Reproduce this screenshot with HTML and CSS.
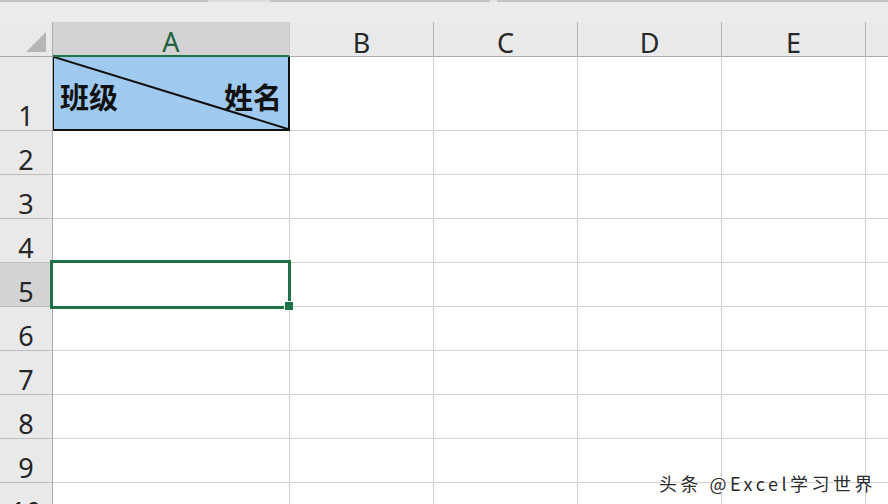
FILE: index.html
```html
<!DOCTYPE html>
<html lang="zh">
<head>
<meta charset="utf-8">
<title>Excel 斜线表头</title>
<link rel="stylesheet" href="styles.css">
</head>
<body>
<div class="sheet">
  <div class="topstrip">
    <span class="seg seg-a"></span>
    <span class="seg seg-gap"></span>
    <span class="seg seg-b"></span>
    <span class="seg seg-gap2"></span>
    <span class="seg seg-c"></span>
  </div>
  <div class="grid">
    <div class="corner">
      <svg class="corner-tri" width="52" height="34" viewBox="0 0 52 34"><polygon points="26,30 46,30 46,10" fill="#b6b6b6"/></svg>
    </div>
    <div class="colhead selected">A</div>
    <div class="colhead">B</div>
    <div class="colhead">C</div>
    <div class="colhead">D</div>
    <div class="colhead">E</div>
    <div class="colhead last"></div>

    <div class="rowhead">1</div>
    <div class="cell a1">
      <svg class="diag" viewBox="0 0 100 100" preserveAspectRatio="none"><line x1="0" y1="0" x2="100" y2="100" stroke="#111" stroke-width="2" vector-effect="non-scaling-stroke"/></svg>
      <span class="a1-text">班级</span>
      <span class="a1-text">姓名</span>
    </div>
    <div class="cell"></div><div class="cell"></div><div class="cell"></div><div class="cell"></div><div class="cell last"></div>

    <div class="rowhead">2</div>
    <div class="cell"></div><div class="cell"></div><div class="cell"></div><div class="cell"></div><div class="cell"></div><div class="cell last"></div>

    <div class="rowhead">3</div>
    <div class="cell"></div><div class="cell"></div><div class="cell"></div><div class="cell"></div><div class="cell"></div><div class="cell last"></div>

    <div class="rowhead">4</div>
    <div class="cell"></div><div class="cell"></div><div class="cell"></div><div class="cell"></div><div class="cell"></div><div class="cell last"></div>

    <div class="rowhead selected">5</div>
    <div class="cell active">
      <div class="selection"></div>
      <div class="fill-handle"></div>
    </div>
    <div class="cell"></div><div class="cell"></div><div class="cell"></div><div class="cell"></div><div class="cell last"></div>

    <div class="rowhead">6</div>
    <div class="cell"></div><div class="cell"></div><div class="cell"></div><div class="cell"></div><div class="cell"></div><div class="cell last"></div>

    <div class="rowhead">7</div>
    <div class="cell"></div><div class="cell"></div><div class="cell"></div><div class="cell"></div><div class="cell"></div><div class="cell last"></div>

    <div class="rowhead">8</div>
    <div class="cell"></div><div class="cell"></div><div class="cell"></div><div class="cell"></div><div class="cell"></div><div class="cell last"></div>

    <div class="rowhead">9</div>
    <div class="cell"></div><div class="cell"></div><div class="cell"></div><div class="cell"></div><div class="cell"></div><div class="cell last"></div>

    <div class="rowhead">10</div>
    <div class="cell"></div><div class="cell"></div><div class="cell"></div><div class="cell"></div><div class="cell"></div><div class="cell last"></div>
  </div>
  <div class="watermark">头条 @Excel学习世界</div>
</div>
</body>
</html>
```

FILE: styles.css
```css
* {
  box-sizing: border-box;
}

html, body {
  margin: 0;
  padding: 0;
  background: #ffffff;
}

body {
  width: 888px;
  height: 504px;
  overflow: hidden;
  font-family: "Noto Sans", "Noto Sans CJK SC", sans-serif;
}

.sheet {
  position: relative;
  width: 888px;
  height: 504px;
  overflow: hidden;
  background: #ebebeb;
}

.topstrip {
  display: flex;
  height: 22px;
  background: #ebebeb;
}

.seg {
  height: 2px;
  background: #c2c2c2;
}

.seg-a { width: 208px; }
.seg-gap { width: 62px; background: #dedede; }
.seg-b { width: 220px; }
.seg-gap2 { width: 7px; background: #e4e4e4; }
.seg-c { flex: 1; }

.grid {
  display: grid;
  grid-template-columns: 53px 237px 144px 144px 144px 144px 1fr;
  grid-template-rows: 35px 74px repeat(9, 44px);
  background: #ffffff;
}

.corner {
  background: #e9e9e9;
  border-right: 1px solid #a9a9a9;
  border-bottom: 1px solid #a9a9a9;
  position: relative;
}

.corner-tri {
  display: block;
}

.colhead {
  display: flex;
  align-items: flex-end;
  justify-content: center;
  background: #e9e9e9;
  border-right: 1px solid #b4b4b4;
  border-bottom: 1px solid #a9a9a9;
  font-size: 27px;
  line-height: 1;
  color: #262626;
}

.colhead.selected {
  background: #d3d3d3;
  color: #22613d;
  border-right: 1px solid #c8c8c8;
  border-bottom: 2px solid #217346;
}

.colhead.last {
  border-right: none;
}

.rowhead {
  display: flex;
  align-items: flex-end;
  justify-content: center;
  padding-bottom: 1px;
  background: #e9e9e9;
  border-right: 1px solid #a9a9a9;
  border-bottom: 1px solid #bdbdbd;
  font-size: 27px;
  line-height: 1;
  color: #262626;
}

.rowhead.selected {
  background: #d3d3d3;
}

.cell {
  background: #ffffff;
  border-right: 1px solid #d0d0d0;
  border-bottom: 1px solid #d0d0d0;
}

.cell.last {
  border-right: none;
}

.a1 {
  position: relative;
  display: flex;
  align-items: flex-end;
  justify-content: space-between;
  padding: 0 6px 18px 6px;
  background: #9fc9ee;
  border-left: 1px solid #111111;
  border-right: 2px solid #111111;
  border-bottom: 2px solid #111111;
}

.diag {
  position: absolute;
  left: 0;
  top: 0;
  width: 100%;
  height: 100%;
}

.a1-text {
  position: relative;
  font-family: "Noto Sans CJK SC", sans-serif;
  font-weight: 700;
  font-size: 29px;
  line-height: 1;
  color: #111111;
}

.active {
  position: relative;
}

.selection {
  position: absolute;
  left: -3px;
  top: -3px;
  width: 241px;
  height: 49px;
  border: 3px solid #1e7145;
}

.fill-handle {
  position: absolute;
  left: 231px;
  top: 38px;
  width: 10px;
  height: 10px;
  background: #1e7145;
  border: 1px solid #ffffff;
}

.watermark {
  position: absolute;
  right: 12px;
  bottom: 12px;
  font-family: "Noto Sans CJK SC", sans-serif;
  font-size: 18px;
  letter-spacing: 3.5px;
  line-height: 1;
  color: #2b2b2b;
  text-shadow: 0 0 2px #ffffff, 0 0 2px #ffffff, 0 0 3px #ffffff;
}
```
